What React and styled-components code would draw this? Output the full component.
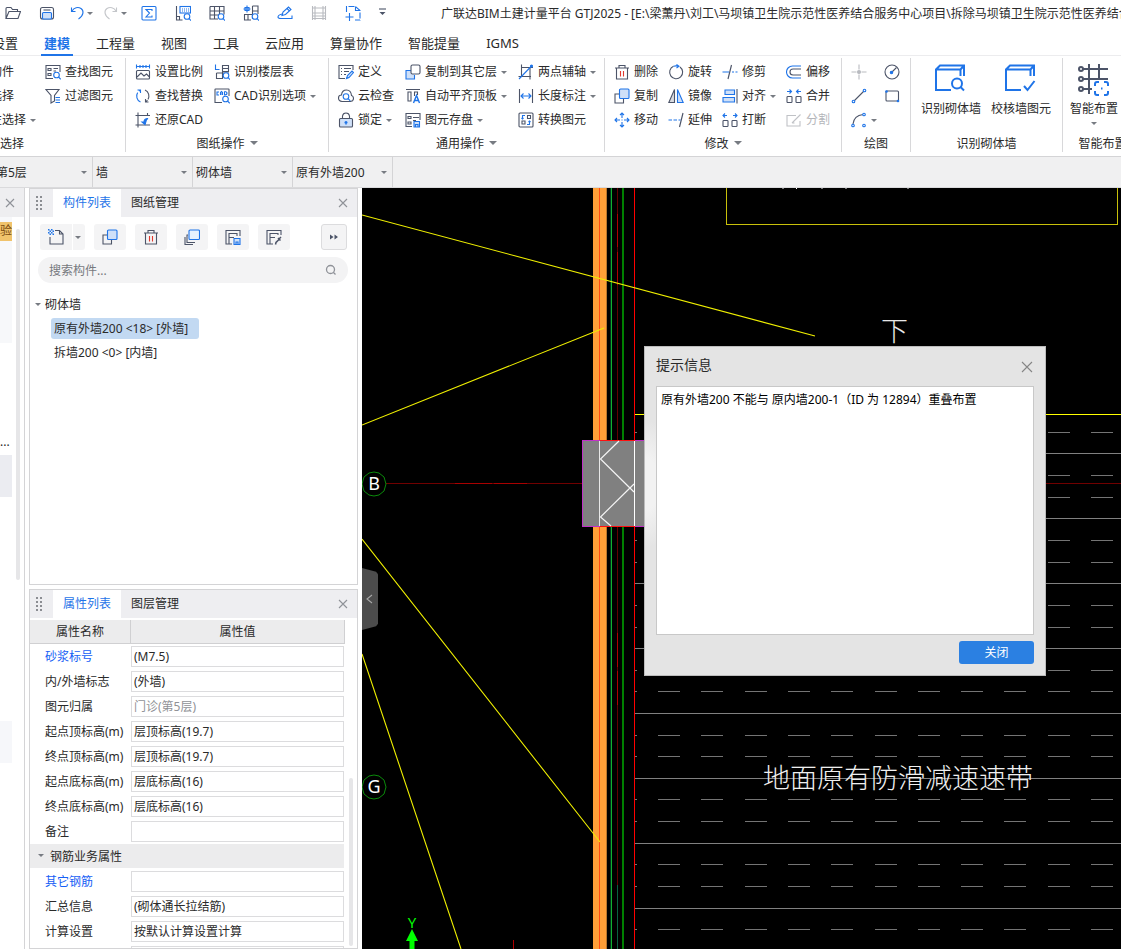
import React from "react";
import styled, { createGlobalStyle, css } from "styled-components";

const INK = "#4c5468";
const BLUE = "#1f74e8";
const PALE = "#cfe0f8";

const GlobalStyle = createGlobalStyle`
  * { box-sizing: border-box; }
  html, body { margin: 0; background: #fff; }
  body, button, input, select {
    font-family: "Noto Sans", "Noto Sans CJK SC", sans-serif;
    font-size: 12px;
    color: #2a2a2a;
  }
  button { border: 0; padding: 0; background: none; }
`;

/* ---------- icons ---------- */

const Lens = ({ x = 11, y = 11 }) => (
  <g stroke={BLUE} fill="#fff">
    <circle cx={x} cy={y} r="2.8" />
    <path d={`M${x + 2} ${y + 2}l2.3 2.3`} fill="none" />
  </g>
);

const ICONS = {
  folder: <path d="M1 13.5V3.5q0-1 1-1h4l1.5 2h5v2M1 13.5L4 6.5h11.5l-2.5 7z" />,
  save: <><rect x="1.5" y="2.5" width="13" height="11.5" rx="2" /><path d="M4.5 5h7" /><rect x="3.5" y="7.5" width="9" height="6.5" rx="1" stroke={BLUE} fill={PALE} /></>,
  undo: <path stroke={BLUE} d="M2.5 2.5v4h4M3 6c2-3.5 6-4.500 9-2.500s3 7-2.500 10.500" />,
  redo: <path stroke="#c4c6ca" d="M13.500 2.500v4h-4M13 6c-2-3.500-6-4.500-9-2.500s-3 7 2.500 10.500" />,
  sigma: <g stroke={BLUE}><rect x="1" y="1.500" width="14" height="13.500" rx="1" /><path d="M11 6V4.500H5L8.500 8 5 12h6v-1.500" /></g>,
  boardSearch: <><path d="M1.500 1v14h6M1.500 11.500h3V15" /><g stroke={BLUE}><rect x="5" y="1.500" width="10.500" height="6.500" /><path d="M7 4h7M7 6h7" strokeDasharray="1 1" /></g><Lens x={12} y={11.500} /></>,
  gridSearch: <><path d="M1 1.500h14v8M1 1.500V14h8M1 6h14M1 10h9M5.500 1.500V14M10.500 1.500V10" /><Lens x={12} y={11.500} /></>,
  nodeSearch: <><path d="M9.500 1h5.500v8M9.500 1v13M9.500 6H15M1 9.500h8.500M1.500 9.500V15H8M5 9.500V15" /><path stroke={BLUE} d="M4 0.500v7M0.500 4h7M2 2.500h4v3H2z" /><Lens x={12} y={11.500} /></>,
  pencil: <g stroke={BLUE}><path d="M5 10.500l1-3.500 5.500-5 2.500 2.500-5.500 5zM10 3.500l2.500 2.500" /><path d="M5 9q-4 1-4 3 0 1.500 3 1.500h11v-3" /></g>,
  film: <g stroke="#b9bbc0"><path d="M1.500 1v14M4 1v14M12 1v14M14.500 1v14M1.500 3h13M1.500 8h13M1.500 11h13M1.500 13.500h13" /></g>,
  pageAdd: <g stroke={BLUE}><path d="M1.500 7V1.500h9L15 5.500V15h-5" strokeDasharray="6 1.500" /><path d="M10.500 1.500v4h4.500M4.500 8v8M0.500 12h8" /></g>,
  find: <><path d="M15 8V1.500H1V14.500h7M3 4.500h3v2H3zM3 9.500h3v2H3zM8.500 4.500H13M8.500 7H11" /><Lens x={11.500} y={11} /></>,
  filter: <><path d="M1 1.500h13L9.500 7.500V13l-3.500 2V7.500z" /><path stroke={BLUE} d="M10.500 9.500H15M10.500 12H15M10.500 14.500H15" /></>,
  scale: <><path stroke={BLUE} d="M1.500 0.500v4M1.500 2.500h13M14.500 0.500v4M5 1v3M8 1v3M11 1v3" /><rect x="1.500" y="6.500" width="13" height="8.500" rx="1" /><path d="M2 13l4-4 3 3 2.500-2 3 3" /></>,
  swap: <><path stroke={BLUE} d="M5.500 14C0.500 12 0.500 4.500 5 2.500M2.500 2h3v3" strokeDasharray="11 2" /><path d="M10 2c5 2 5 9 1 11.500M13.500 14h-3v-3" strokeDasharray="11 1" /></>,
  restore: <><path d="M3 0.500V15.500M0.500 3.500H15M0.500 13H15M12.500 1v3" /><path stroke={BLUE} fill={BLUE} d="M13 6.500c-3 0-4 1.500-4 3.500H7l3 2.500 1-3q0-2 2-3z" /></>,
  floors: <><path stroke={BLUE} d="M1.500 0.500v5h4" /><path d="M8.500 1.500h6v6h-6zM2.500 9H15M2.500 9v5.500h6V7.500M8.500 4.500h6" /><Lens x={12} y={11.500} /></>,
  cad: <><path d="M15 8V1.500q0-.5-.5-.5H1.500q-.5 0-.5.5v13h7" /><path stroke={BLUE} d="M5 4H3v3h2M6.500 7V4.500L7.500 3.500l1 1V7M6.500 6h2M10.500 3.500V7q2.500 0 2.500-1.700t-2.500-1.800" /><Lens x={11.500} y={11} /></>,
  define: <><path d="M15 6V1.500H1V14.500h6M3 4.500h1M6 4.500h7M3 7.500h1M6 7.500h5M3 10.500h1M6 10.500h2" /><path stroke={BLUE} fill={PALE} d="M8.500 14.500l1-3L14 7l1.500 1.500-4.500 5z" /></>,
  cloud: <><path d="M4 13.500q-3.500-.5-3.500-3.500T3.500 7Q4 2 8.500 2t5 5.500q2 .5 2 3t-3 3z" /><Lens x={8} y={8.500} /></>,
  lock: <><path d="M4.500 6.500V4Q5 1 8 1t3.500 3v2.500" /><rect x="1.500" y="6.500" width="13" height="8.500" rx="1" fill={PALE} /><path stroke={BLUE} strokeWidth="1.500" d="M8 9v3.500M6.500 10.500h3" /></>,
  copyFloor: <><path stroke={BLUE} fill={PALE} d="M6 6.500H1V15h8.500v-4" /><rect x="6" y="1" width="9" height="9" rx="1.500" fill="#fff" /></>,
  alignTop: <><path d="M1 1.500h14M3 4h3v9H3zM9.500 8V4h3v3" /><path stroke={BLUE} strokeWidth="1.400" d="M8.500 15l3-7.500 3 7.500M9.500 12.500h4" /></>,
  store: <><path d="M15 8V1.500H1V14.500h6M3 4.500h3v2H3zM3 10h3v2H3zM8 5.500h6M8 8.500h3" /><path stroke={BLUE} fill={PALE} d="M9 9.500h5.500V15H9zM10.500 15v-2.500H13V15" /></>,
  axis: <><path d="M3.500 0.500v12M12 3v12.500M3 3.500h12M0.500 12.500H13" /><path stroke={BLUE} d="M1 15L14 1.500" /><circle cx="13.500" cy="2" r="1" fill={BLUE} stroke={BLUE} /></>,
  length: <><path d="M1.500 1v14M14.500 1v14" /><path stroke={BLUE} d="M3 8h10M5.500 5.500L3 8l2.500 2.500M10.500 5.500L13 8l-2.500 2.500" /></>,
  convert: <><rect x="1" y="1" width="14" height="14" rx="1" /><path d="M4 9h3v3H4zM9.500 3.500h3v3h-3z" /><path stroke={BLUE} d="M7 3.500H4.500V7M3.500 6l1 1 1-1M9 12.500h2.500V9M10.500 10l1-1 1 1" /></>,
  trash: <><path d="M1 4h14M5 4V1.500h6V4M2.500 4v11h11V4" /><path stroke="#e0392f" d="M6.500 7v5.500M9.500 7v5.500" /></>,
  copy: <><path d="M5.500 6H1v9h8.500v-4" /><rect x="5.500" y="1" width="9.500" height="9.500" rx="1" stroke={BLUE} fill={PALE} /></>,
  move: <path stroke={BLUE} d="M8 1v5M8 10v5M1 8h5M10 8h5M6 3l2-2 2 2M6 13l2 2 2-2M3 6L1 8l2 2M13 6l2 2-2 2M7.500 8h1" />,
  rotate: <><path d="M12 3a6.500 6.500 0 1 1-6.500-.7" /><path stroke={BLUE} d="M5.500 2.300q2.500-.8 5 0M8.500 0.500l2.500 1.800-2.500 1.700" /></>,
  mirror: <><path fill="#d9dbe0" d="M6.500 1.500V14.500H0.800z" /><path stroke={BLUE} fill={PALE} d="M9.500 1.500V14.500h5.700z" /></>,
  extend: <><path d="M15 1l-3.500 14" /><path stroke={BLUE} d="M0.500 8h3.500M5.500 8h3.500M10.500 8h2" /></>,
  trim: <><path d="M9.500 1L6 15" /><path stroke={BLUE} d="M0.500 8H7M10 8h2M13.500 8h2" /></>,
  align: <><path d="M15 1v14.500" /><path stroke={BLUE} fill={PALE} d="M3 2h9.500v4.500H3zM1 9.500h11.500V14H1z" /></>,
  breakIt: <><rect x="1" y="8.500" width="5" height="6" rx=".8" /><rect x="10" y="8.500" width="5" height="6" rx=".8" /><path stroke={BLUE} d="M1 3.500h4M3 1.500l-2 2 2 2M15 3.500h-4M13 1.500l2 2-2 2" /></>,
  offset: <><path stroke={BLUE} d="M15 2H6.500a6 6 0 0 0 0 12H15" /><path d="M15 5H7a3 3 0 0 0 0 6h8" /></>,
  merge: <><rect x="1" y="8.500" width="5" height="6" rx=".8" /><rect x="10" y="8.500" width="5" height="6" rx=".8" /><path stroke={BLUE} d="M1 3.500h4M3.500 1.500l2 2-2 2M15 3.500h-4M12.500 1.500l-2 2 2 2" /></>,
  split: <g stroke="#c0c2c6"><path d="M10 3.500H1V14h13V9M6 11L14.500 2.500M6 11h2.500" /></g>,
  point: <g stroke="#b9bbc0"><path d="M8 0.500v5M8 10.500v5M0.500 8h5M10.500 8h5" /><circle cx="8" cy="8" r="1.500" fill="#b9bbc0" /></g>,
  circle: <><circle cx="8" cy="8" r="7" /><path d="M8 8l4.500-4.500" /><circle cx="7.500" cy="8.500" r="1.200" stroke={BLUE} fill={BLUE} /></>,
  line: <><path d="M3 13L13 3" /><g stroke={BLUE} fill="#fff"><circle cx="2.500" cy="13.500" r="1.300" /><circle cx="13.500" cy="2.500" r="1.300" /></g></>,
  rect: <><rect x="2" y="3" width="12.500" height="10" rx="1" /><g fill={BLUE} stroke={BLUE}><circle cx="2.500" cy="3.500" r=".8" /><circle cx="14" cy="13" r=".8" /></g></>,
  arc: <><path d="M2 12Q3 3.500 12 2.500" /><g stroke={BLUE} fill="#fff"><circle cx="2" cy="13.500" r="1.300" /><circle cx="13" cy="2.500" r="1.300" /><circle cx="13" cy="13.500" r="1.300" /></g></>,
  newItem: <><path d="M7 1.500h4.500L15 5v10H2V8M11.500 1.500V5H15" /><path fill={BLUE} stroke="none" d="M0 0h1.500v1.500H0zM3 0h1.500v1.500H3zM1.500 1.500H3V3H1.500zM4.500 1.500H6V3H4.500zM0 3h1.500v1.500H0zM3 3h1.500v1.500H3zM1.500 4.500H3V6H1.500zM4.500 4.500H6V6H4.500z" /></>,
  stack: <><path d="M4 6H3v7.500h8M1 8v7.500H9" /><rect x="5" y="1" width="10.500" height="9.500" rx="1" stroke={BLUE} fill="#e6f1fe" /></>,
  layerSave: <><path d="M15 7V1.500H1V15h6M4 15V4.500h8V7M4 8.500h5" /><path stroke={BLUE} fill={PALE} d="M9 9.500h6V15.500H9zM11 15v-2h2v2" /></>,
  layerPick: <><path d="M15 6V1.500H1V15h6M4 15V4.500h8V6M4 8.500h5" /><path d="M9.500 15.500l.5-2 3-3M12 9l2.500 2.500M13 10l2-2" strokeWidth="1.500" /></>,
  wallFind: <g stroke={BLUE} strokeWidth="2"><path d="M16 26H1V5.500L5 1.500H29V12M1 5.500H25.500V12M25.500 5.500l3.500-4" /><circle cx="22" cy="19.500" r="5" /><path d="M25.500 23l3.500 3.500" /></g>,
  wallCheck: <g stroke={BLUE} strokeWidth="2"><path d="M16 26H1V5.500L5 1.500H29V12M1 5.500H25.500V12M25.500 5.500l3.500-4M19 22l3.500 4 7-9" /></g>,
  smart: <g strokeWidth="2"><path d="M5 5h25M5 15h25M5 25h9M11 0v30M21 0v14" /><circle cx="3" cy="5" r="2" fill="#fff" /><circle cx="3" cy="15" r="2" fill="#fff" /><circle cx="3" cy="25" r="2" fill="#fff" /><path stroke={BLUE} d="M17 22v-2q0-2 2-2h2M26 18h2q2 0 2 2v2M30 27v2q0 2-2 2h-2M21 31h-2q-2 0-2-2v-2M23 24.500h1.500" /></g>,
  lens: <g stroke="#8f9298" strokeWidth="1.300"><circle cx="7.500" cy="7.500" r="4" /><path d="M10.500 10.500l2 2" /></g>,
  close: <path stroke="#8f9298" d="M4 4l8 8M12 4l-8 8" />,
  more: <path fill={INK} stroke="none" d="M4 5.500l3.500 2.500L4 10.500zM8.500 5.500L12 8l-3.500 2.500z" />,
  custom: <><path d="M0 4h7" /><path fill={INK} stroke="none" d="M0.500 7h6L3.500 10z" /></>,
};

const Svg = styled.svg`
  flex: none;
  display: block;
  fill: none;
  stroke: ${INK};
  stroke-width: 1.1;
`;
const Icon = ({ name, size = 16 }) => (
  <Svg width={size} height={size} viewBox={`0 0 ${size} ${size}`} aria-hidden="true">{ICONS[name]}</Svg>
);

const Caret = styled.span`
  flex: none;
  width: 0;
  height: 0;
  border: ${(p) => (p.$big ? 4 : 3)}px solid transparent;
  border-top-color: #777b82;
  border-bottom: 0;
  pointer-events: none;
`;

/* ---------- title bar and tabs ---------- */

const Page = styled.div`
  display: flex;
  flex-direction: column;
  height: 100vh;
  overflow: hidden;
`;
const TitleBar = styled.header`
  display: flex;
  align-items: center;
  height: 26px;
  overflow: hidden;
  white-space: nowrap;
`;
const QuickBar = styled.div`
  display: flex;
  align-items: center;
  flex: none;
  gap: 18px;
  padding-left: 5px;
`;
const HistoryPair = styled.div`
  display: flex;
  gap: 10px;
  margin: 0 -4px;
`;
const QuickButton = styled.button`
  display: flex;
  align-items: center;
  gap: 2px;
`;
const Title = styled.div`
  margin-left: 46px;
`;
const TabRow = styled.nav`
  display: flex;
  height: 30px;
  margin-left: -21px;
  border-bottom: 1px solid #ececee;
`;
const Tab = styled.button`
  flex: none;
  height: 30px;
  margin: 0 10px;
  padding: 6px 3px 0;
  font-size: 13px;
  line-height: 22px;
  border-bottom: 2px solid transparent;
  ${(p) => p.$active && css`
    color: ${BLUE};
    font-weight: 700;
    border-bottom-color: ${BLUE};
  `}
`;

/* ---------- ribbon ---------- */

const Ribbon = styled.section`
  display: flex;
  flex: none;
  padding: 2px 0 4px;
  border-bottom: 1px solid #d4d4d6;
  overflow: hidden;
`;
const Group = styled.div`
  display: flex;
  flex-direction: column;
  flex: none;
  width: ${(p) => p.$w}px;
  margin-left: ${(p) => p.$bleed || 0}px;
  padding-top: 2px;
  border-right: 1px solid #d8d8da;
`;
const GroupBody = styled.div`
  display: flex;
  gap: ${(p) => p.$gap ?? 11}px;
  height: 72px;
  padding-left: ${(p) => p.$pad ?? 9}px;
`;
const GroupName = styled.div`
  display: flex;
  align-items: center;
  justify-content: center;
  gap: 5px;
  height: 20px;
  padding-top: 1px;
`;
const Column = styled.div`
  display: flex;
  flex-direction: column;
`;
const Tool = styled.button`
  display: flex;
  align-items: center;
  gap: 4px;
  height: 24px;
  line-height: 24px;
  white-space: nowrap;
  color: ${(p) => (p.disabled ? "#b4b6ba" : "inherit")};
`;
const BigTool = styled.button`
  display: flex;
  flex-direction: column;
  align-items: center;
  gap: 4px;
  padding-top: 4px;
  line-height: 18px;
`;

const RibbonGroup = ({ name, menu, w, bleed, pad, gap, children }) => (
  <Group $w={w} $bleed={bleed}>
    <GroupBody $pad={pad} $gap={gap}>{children}</GroupBody>
    <GroupName>{name}{menu && <Caret $big />}</GroupName>
  </Group>
);
const ToolColumn = ({ tools }) => (
  <Column>
    {tools.map(([icon, text, menu, off]) => (
      <Tool key={icon} disabled={!!off} aria-label={text || icon}>
        <Icon name={icon} />{text}{menu && <Caret />}
      </Tool>
    ))}
  </Column>
);
const LargeTool = ({ icon, text, menu }) => (
  <BigTool><Icon name={icon} size={32} /><span>{text}</span>{menu && <Caret />}</BigTool>
);

/* ---------- selector bar ---------- */

const SelectorBar = styled.div`
  display: flex;
  flex: none;
  height: 31px;
  background: #f0f0f1;
  border-bottom: 1px solid #dadadc;
`;
const Picker = styled.label`
  display: grid;
  align-items: center;
  width: 100px;
  border-right: 1px solid #d4d4d6;
  &:first-child { margin-left: -7px; }
  > * { grid-area: 1 / 1; }
  ${Caret} { justify-self: end; margin-right: 5px; }
`;
const Select = styled.select`
  appearance: none;
  width: 100%;
  height: 30px;
  padding: 0 16px 0 3px;
  border: 0;
  background: none;
`;

/* ---------- side panels ---------- */

const Workspace = styled.main`
  display: flex;
  flex: 1;
  min-height: 0;
`;
const Sliver = styled.aside`
  display: flex;
  flex-direction: column;
  flex: none;
  width: 25px;
  border-right: 1px solid #d4d4d6;
`;
const SliverHead = styled.div`
  display: flex;
  align-items: center;
  height: 29px;
  padding-right: 6px;
  background: #eeeef0;
`;
const SliverBody = styled.div`
  display: flex;
  flex: 1;
  gap: 4px;
`;
const SliverList = styled.div`
  width: 12px;
  overflow: hidden;
`;
const SliverBlock = styled.div`
  height: ${(p) => p.$h}px;
  background: ${(p) => p.$bg || "transparent"};
  padding-top: ${(p) => p.$top || 0}px;
  line-height: 18px;
`;
const Badge = styled.div`
  display: flex;
  justify-content: flex-end;
  height: 19px;
  background: #f0c36c;
  color: #7a4c10;
`;
const Thumb = styled.div`
  width: 4px;
  height: ${(p) => p.$h}px;
  margin-top: ${(p) => p.$top}px;
  border-radius: 2px;
  background: #e6e6e8;
`;
const PanelStack = styled.div`
  display: flex;
  flex-direction: column;
  flex: none;
  gap: 4px;
  width: 329px;
  margin: 0 4px;
`;
const Panel = styled.section`
  display: flex;
  flex-direction: column;
  flex: ${(p) => p.$grow} 1 0;
  min-height: 0;
  overflow: hidden;
  border: 1px solid #d4d4d6;
`;
const PanelHead = styled.header`
  display: flex;
  align-items: stretch;
  flex: none;
  height: 28px;
  padding: 0 6px;
  background: #eeeef1;
`;
const Grip = styled.span`
  align-self: center;
  width: 6px;
  height: 14px;
  margin-right: 11px;
  background: radial-gradient(circle at 1px 1px, #8b8d92 1px, transparent 1px) 0 0 / 4px 4px;
`;
const PanelTab = styled.button`
  padding: 0 10px;
  line-height: 28px;
  ${(p) => p.$active && css`
    background: #fff;
    color: ${BLUE};
  `}
`;
const CloseButton = styled.button`
  margin-left: auto;
  display: flex;
  align-items: center;
`;
const ToolStrip = styled.div`
  display: flex;
  gap: 9px;
  padding: 7px 10px;
`;
const StripButton = styled.button`
  display: flex;
  align-items: center;
  justify-content: center;
  gap: 11px;
  width: ${(p) => p.$w || 32}px;
  height: 26px;
  padding-left: ${(p) => (p.$menu ? 3 : 0)}px;
  border-radius: 3px;
  background: #f4f4f5;
  ${(p) => p.$menu && css`
    background: linear-gradient(90deg, #f4f4f5 32px, #fff 32px, #fff 33px, #f4f4f5 33px);
  `}
  ${(p) => p.$last && css`
    margin-left: auto;
    border: 1px solid #dcdcde;
  `}
`;
const SearchBox = styled.label`
  display: flex;
  align-items: center;
  height: 26px;
  margin: 0 9px 0 8px;
  padding: 0 9px 0 11px;
  border-radius: 13px;
  background: #f3f3f4;
`;
const SearchInput = styled.input`
  flex: 1;
  min-width: 0;
  padding: 0;
  border: 0;
  outline: 0;
  background: none;
  &::placeholder { color: #77797e; opacity: 1; }
`;
const Tree = styled.ul`
  list-style: none;
  margin: 9px 0 0;
  padding: 0 5px;
  ul { list-style: none; margin: 0; padding: 0 0 0 16px; }
`;
const TreeRow = styled.button`
  display: flex;
  align-items: center;
  gap: 4px;
  height: 24px;
`;
const TreeItem = styled.button`
  display: block;
  height: 21px;
  margin: 2px 0 3px;
  padding: 0 11px 0 3px;
  border-radius: 3px;
  line-height: 21px;
  background: ${(p) => (p.$active ? "#c2d9f2" : "transparent")};
`;

/* ---------- property table ---------- */

const TableArea = styled.div`
  display: flex;
  gap: 4px;
  padding-top: 2px;
`;
const PropTable = styled.table`
  width: 315px;
  table-layout: fixed;
  border-collapse: separate;
  border-spacing: 0;
  th, td { padding: 0; font-weight: 400; }
  thead th {
    height: 24px;
    padding-top: 2px;
    line-height: 20px;
    background: #ececed;
    border-right: 1px solid #d0d0d2;
    border-bottom: 1px solid #d0d0d2;
  }
  thead th:first-child { width: 101px; }
  tbody th { height: 25px; }
`;
const PropLabel = styled.label`
  display: block;
  padding-left: 15px;
  text-align: left;
  line-height: 25px;
  white-space: nowrap;
  color: ${(p) => (p.$link ? "#1660f5" : "inherit")};
`;
const PropInput = styled.input`
  display: block;
  width: 213px;
  height: 21px;
  padding: 0 2px;
  border: 1px solid #dcdcde;
  background: #fff;
  &:disabled { color: #909296; }
`;
const SectionCell = styled.button`
  display: flex;
  align-items: center;
  gap: 6px;
  width: 314px;
  height: 24px;
  margin-bottom: 1px;
  padding-left: 8px;
  background: #ececed;
`;

/* ---------- drawing and dialog ---------- */

const Canvas = styled.section`
  position: relative;
  flex: 1;
  min-width: 0;
  overflow: hidden;
  background: #000;
`;
const Drawing = styled.svg`
  position: absolute;
  inset: 0;
  width: 100%;
  height: 100%;
  fill: none;
  text { font-family: "Noto Sans", "Noto Sans CJK SC", sans-serif; }
`;
const FoldHandle = styled.button`
  position: absolute;
  left: 0;
  top: 380px;
  width: 16px;
  height: 62px;
  background: #4c4c4c;
  clip-path: polygon(0 0, 88% 6%, 100% 10%, 100% 90%, 88% 94%, 0 100%);
`;
const Dialog = styled.div`
  position: absolute;
  left: 282px;
  top: 158px;
  display: flex;
  flex-direction: column;
  width: 402px;
  height: 330px;
  padding: 0 11px 11px;
  border: 1px solid #bcbcbc;
  background: radial-gradient(ellipse 36px 64px at 0 137px, #f2f2f2 40%, transparent) #e4e4e4;
`;
const DialogHead = styled.div`
  display: flex;
  align-items: center;
  height: 39px;
  h2 { margin: 0; padding-bottom: 3px; font-size: 14px; font-weight: 400; line-height: 20px; }
`;
const DialogText = styled.div`
  flex: 1;
  padding: 4px;
  border: 1px solid #c8c8c8;
  background: #fff;
  color: #000;
  line-height: 18px;
`;
const DialogButton = styled.button`
  align-self: flex-end;
  width: 75px;
  height: 23px;
  margin-top: 6px;
  border-radius: 3px;
  background: #2b80e2;
  color: #fff;
  line-height: 24px;
`;

const properties = [
  ["砂浆标号", "(M7.5)", "link"],
  ["内/外墙标志", "(外墙)"],
  ["图元归属", "门诊(第5层)", "off"],
  ["起点顶标高(m)", "层顶标高(19.7)"],
  ["终点顶标高(m)", "层顶标高(19.7)"],
  ["起点底标高(m)", "层底标高(16)"],
  ["终点底标高(m)", "层底标高(16)"],
  ["备注", ""],
];
const rebarProperties = [
  ["其它钢筋", "", "link"],
  ["汇总信息", "(砌体通长拉结筋)"],
  ["计算设置", "按默认计算设置计算"],
  ["搭接设置", "按默认搭接设置计算"],
];

const PropRows = ({ rows }) => rows.map(([label, value, kind]) => (
  <tr key={label}>
    <th scope="row"><PropLabel htmlFor={label} $link={kind === "link"}>{label}</PropLabel></th>
    <td><PropInput id={label} defaultValue={value} disabled={kind === "off"} /></td>
  </tr>
));

const SOLID_ROWS = [453, 518, 583, 648, 713, 778, 843, 908];
const DASH_ROWS = [432, 475, 497, 540, 562, 605, 627, 670, 691, 735, 756, 799, 821, 864, 886, 929];

const Bubble = ({ x, y, text }) => (
  <g>
    <path stroke="#0b8a0b" fill="#000" d={`M${x - 5} ${y - 11}l5-1 5 1 5 4 2 7-2 7-5 4-5 1-5-1-5-4-2-7 2-7z`} />
    <text x={x} y={y + 6} fontSize="18" textAnchor="middle" fill="#fff">{text}</text>
  </g>
);

const Plan = () => (
  <Drawing aria-label="平面图">
    <g transform="translate(-362 -188)">
      <g shapeRendering="crispEdges">
        <path stroke="#700000" d="M386 483.500H582M1046 483.500H3000" />
        <path stroke="#a80000" d="M455 483.500H492M494 483.500H527" />
        <path fill="#ff9f38" d="M593 188h14V3000h-14z" />
        <path stroke="#ff4a12" d="M599.500 188V3000" />
        <path stroke="#b9752c" d="M606.500 188V3000" />
        <path stroke="#00301a" d="M610.500 188V3000" />
        <path stroke="#10b030" d="M611.500 188V3000" />
        <path stroke="#640000" d="M617.500 188V885" />
        <path stroke="#b00000" d="M617.500 214V247M617.500 252V285M617.500 633V667M617.500 671V705M513.500 940V960" />
        <path stroke="#0a6042" d="M617.500 885V3000" />
        <path stroke="#008000" strokeWidth="2" d="M623 188V3000" />
        <path stroke="#fff" d="M796 188.500h1" />
        <path stroke="#777" d="M782 188.500h2M821 188.500h2M845 188.500h2M907 188.500h2" />
        <path stroke="#c8c00a" d="M726.500 188V224.500H1117.500V188" />
        <path stroke="#ffff00" d="M635 414.500H3000" />
        {SOLID_ROWS.map((y) => <path key={y} stroke="#808080" d={`M635 ${y + 0.5}H3000`} />)}
        {DASH_ROWS.map((y) => <path key={y} stroke="#747474" strokeDasharray="22 21.300" d={`M658 ${y + 0.5}H3000`} />)}
        {DASH_ROWS.map((y) => <path key={y} stroke="#747474" d={`M635 ${y + 0.5}h2`} />)}
        <path stroke="#ff0000" d="M634.500 188V3000" />
        <rect x="582.500" y="440.500" width="70" height="86" fill="#808080" stroke="#c030c8" />
        <path stroke="#ff1010" d="M600 440.500H635M600 526.500H635" />
        <path stroke="#e8e8e8" strokeWidth="1" d="M599.500 441V526" />
        <path stroke="#fff" d="M634.500 441V526" />
      </g>
      <path stroke="#f4f4f4" strokeWidth="1.200" d="M619 441L600.500 459L634 492M634 484L600.500 517L611 526" />
      <path stroke="#efef00" strokeWidth="1.100" d="M362 215L815 336M362 425L604 328M362 539L600 842M362 654L461 949" />
      <Bubble x={374} y={484} text="B" />
      <Bubble x={374} y={787} text="G" />
      <text x="763" y="788" fontSize="27" fontWeight="300" fill="#f0f0f0">地面原有防滑减速速带</text>
      <text x="881" y="341" fontSize="27" fontWeight="300" fill="#e8e8e8">下</text>
      <text x="412" y="928" fontSize="15" textAnchor="middle" fill="#00ff00">Y</text>
      <path fill="#00ff00" d="M412 929l6 12h-3.500v20h-5v-20h-3.500z" />
    </g>
  </Drawing>
);

const tabs = ["设置", "建模", "工程量", "视图", "工具", "云应用", "算量协作", "智能提量", "IGMS"];
const pickers = [["楼层", "第5层"], ["构件大类", "墙"], ["构件类型", "砌体墙"], ["构件", "原有外墙200"]];

export default function App() {
  return (
    <Page>
      <GlobalStyle />
      <TitleBar>
        <QuickBar>
          <QuickButton aria-label="打开"><Icon name="folder" /></QuickButton>
          <QuickButton aria-label="保存"><Icon name="save" /></QuickButton>
          <HistoryPair>
            <QuickButton aria-label="撤销"><Icon name="undo" /><Caret /></QuickButton>
            <QuickButton aria-label="恢复" disabled><Icon name="redo" /><Caret /></QuickButton>
          </HistoryPair>
          {["sigma", "boardSearch", "gridSearch", "nodeSearch", "pencil", "film", "pageAdd"].map((n) => (
            <QuickButton key={n} aria-label={n}><Icon name={n} /></QuickButton>
          ))}
          <QuickButton aria-label="自定义"><Icon name="custom" /></QuickButton>
        </QuickBar>
        <Title>广联达BIM土建计量平台 GTJ2025 - [E:\梁薰丹\刘工\马坝镇卫生院示范性医养结合服务中心项目\拆除马坝镇卫生院示范性医养结合服务中心]</Title>
      </TitleBar>
      <TabRow>
        {tabs.map((t) => <Tab key={t} $active={t === "建模"}>{t}</Tab>)}
      </TabRow>

      <Ribbon>
        <RibbonGroup name="选择" w={227} bleed={-101} pad={47} gap={9}>
          <ToolColumn tools={[["point", "拾取构件"], ["find", "批量选择"], ["filter", "按属性选择", true]]} />
          <ToolColumn tools={[["find", "查找图元"], ["filter", "过滤图元"]]} />
        </RibbonGroup>
        <RibbonGroup name="图纸操作" menu w={203}>
          <ToolColumn tools={[["scale", "设置比例"], ["swap", "查找替换"], ["restore", "还原CAD"]]} />
          <ToolColumn tools={[["floors", "识别楼层表"], ["cad", "CAD识别选项", true]]} />
        </RibbonGroup>
        <RibbonGroup name="通用操作" menu w={276}>
          <ToolColumn tools={[["define", "定义"], ["cloud", "云检查"], ["lock", "锁定", true]]} />
          <ToolColumn tools={[["copyFloor", "复制到其它层", true], ["alignTop", "自动平齐顶板", true], ["store", "图元存盘", true]]} />
          <ToolColumn tools={[["axis", "两点辅轴", true], ["length", "长度标注", true], ["convert", "转换图元"]]} />
        </RibbonGroup>
        <RibbonGroup name="修改" menu w={237} gap={10}>
          <ToolColumn tools={[["trash", "删除"], ["copy", "复制"], ["move", "移动"]]} />
          <ToolColumn tools={[["rotate", "旋转"], ["mirror", "镜像"], ["extend", "延伸"]]} />
          <ToolColumn tools={[["trim", "修剪"], ["align", "对齐", true], ["breakIt", "打断"]]} />
          <ToolColumn tools={[["offset", "偏移"], ["merge", "合并"], ["split", "分割", false, true]]} />
        </RibbonGroup>
        <RibbonGroup name="绘图" w={69} gap={7}>
          <ToolColumn tools={[["point", ""], ["line", ""], ["arc", "", true]]} />
          <ToolColumn tools={[["circle", ""], ["rect", ""]]} />
        </RibbonGroup>
        <RibbonGroup name="识别砌体墙" w={152} gap={10} pad={10}>
          <LargeTool icon="wallFind" text="识别砌体墙" />
          <LargeTool icon="wallCheck" text="校核墙图元" />
        </RibbonGroup>
        <RibbonGroup name="智能布置" w={80} pad={7}>
          <LargeTool icon="smart" text="智能布置" menu />
        </RibbonGroup>
      </Ribbon>

      <SelectorBar>
        {pickers.map(([name, value]) => (
          <Picker key={name}>
            <Select aria-label={name}><option>{value}</option></Select>
            <Caret />
          </Picker>
        ))}
      </SelectorBar>

      <Workspace>
        <Sliver>
          <SliverHead><CloseButton aria-label="关闭导航"><Icon name="close" /></CloseButton></SliverHead>
          <SliverBody>
            <SliverList>
              <SliverBlock $h={126} $bg="#f7f8fa" $top={5}><Badge>验</Badge></SliverBlock>
              <SliverBlock $h={112} $top={90}>...</SliverBlock>
              <SliverBlock $h={42} $bg="#ebecf1" />
              <SliverBlock $h={224} />
              <SliverBlock $h={42} $bg="#f6f7fa" />
            </SliverList>
            <Thumb $h={351} $top={12} />
          </SliverBody>
        </Sliver>

        <PanelStack>
          <Panel $grow={397}>
            <PanelHead>
              <Grip />
              <PanelTab $active>构件列表</PanelTab>
              <PanelTab>图纸管理</PanelTab>
              <CloseButton aria-label="关闭构件列表"><Icon name="close" /></CloseButton>
            </PanelHead>
            <ToolStrip>
              <StripButton $w={45} $menu aria-label="新建"><Icon name="newItem" /><Caret /></StripButton>
              <StripButton aria-label="复制构件"><Icon name="copy" /></StripButton>
              <StripButton aria-label="删除构件"><Icon name="trash" /></StripButton>
              <StripButton aria-label="层间复制"><Icon name="stack" /></StripButton>
              <StripButton aria-label="构件存档"><Icon name="layerSave" /></StripButton>
              <StripButton aria-label="提取构件"><Icon name="layerPick" /></StripButton>
              <StripButton $w={26} $last aria-label="更多"><Icon name="more" /></StripButton>
            </ToolStrip>
            <SearchBox>
              <SearchInput placeholder="搜索构件..." aria-label="搜索构件" />
              <Icon name="lens" />
            </SearchBox>
            <Tree>
              <li>
                <TreeRow><Caret />砌体墙</TreeRow>
                <ul>
                  <li><TreeItem $active>原有外墙200 &lt;18&gt; [外墙]</TreeItem></li>
                  <li><TreeItem>拆墙200 &lt;0&gt; [内墙]</TreeItem></li>
                </ul>
              </li>
            </Tree>
          </Panel>

          <Panel $grow={360}>
            <PanelHead>
              <Grip />
              <PanelTab $active>属性列表</PanelTab>
              <PanelTab>图层管理</PanelTab>
              <CloseButton aria-label="关闭属性列表"><Icon name="close" /></CloseButton>
            </PanelHead>
            <TableArea>
              <PropTable>
                <thead><tr><th scope="col">属性名称</th><th scope="col">属性值</th></tr></thead>
                <tbody>
                  <PropRows rows={properties} />
                  <tr><td colSpan={2}><SectionCell><Caret />钢筋业务属性</SectionCell></td></tr>
                  <PropRows rows={rebarProperties} />
                </tbody>
              </PropTable>
              <Thumb $h={168} $top={158} />
            </TableArea>
          </Panel>
        </PanelStack>

        <Canvas>
          <Plan />
          <FoldHandle aria-label="收起面板">
            <Svg width="16" height="62" viewBox="0 0 16 62"><path stroke="#a8a8a8" d="M10 27l-5 4 5 4" /></Svg>
          </FoldHandle>
          <Dialog role="dialog" aria-labelledby="dialog-title">
            <DialogHead>
              <h2 id="dialog-title">提示信息</h2>
              <CloseButton aria-label="关闭提示"><Svg width="14" height="14" viewBox="0 0 14 14"><path stroke="#858585" d="M2 2l10 10M12 2L2 12" /></Svg></CloseButton>
            </DialogHead>
            <DialogText>原有外墙200 不能与 原内墙200-1（ID 为 12894）重叠布置</DialogText>
            <DialogButton>关闭</DialogButton>
          </Dialog>
        </Canvas>
      </Workspace>
    </Page>
  );
}
